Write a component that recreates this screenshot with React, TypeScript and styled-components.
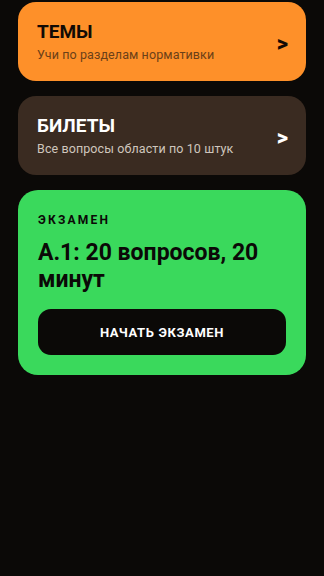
import React from "react";
import styled, { createGlobalStyle } from "styled-components";

const Global = createGlobalStyle`
  html, body {
    margin: 0;
    padding: 0;
    background: #0b0907;
  }
  body {
    font-family: Roboto, "Noto Sans", sans-serif;
  }
`;

const Page = styled.div`
  min-height: 576px;
  background: #0b0907;
  padding: 2px 18px 20px;
  box-sizing: border-box;
  display: flex;
  flex-direction: column;
  gap: 15px;
`;

const NavCard = styled.div<{ $bg: string; $fg: string }>`
  background: ${(p) => p.$bg};
  color: ${(p) => p.$fg};
  border-radius: 18px;
  height: 79px;
  box-sizing: border-box;
  padding: 0 18px 0 19px;
  display: flex;
  align-items: center;
  justify-content: space-between;
`;

const NavText = styled.div`
  display: flex;
  flex-direction: column;
  gap: 4px;
`;

const NavTitle = styled.div`
  font-size: 19px;
  font-weight: 700;
  line-height: 22px;
`;

const NavSub = styled.div<{ $c: string }>`
  font-size: 12.5px;
  line-height: 16px;
  letter-spacing: 0.1px;
  color: ${(p) => p.$c};
`;

const Arrow = styled.span`
  font-size: 22px;
  font-weight: 900;
  line-height: 1;
  margin-top: 4px;
`;

const ExamCard = styled.div`
  background: #3ad95c;
  color: #0b0907;
  border-radius: 20px;
  padding: 22px 20px 20px;
  display: flex;
  flex-direction: column;
`;

const Label = styled.div`
  font-size: 12px;
  font-weight: 700;
  letter-spacing: 2.2px;
  line-height: 16px;
`;

const ExamTitle = styled.div`
  font-size: 23px;
  font-weight: 700;
  line-height: 27px;
  margin-top: 11px;
`;

const StartButton = styled.button`
  margin-top: 16px;
  height: 46px;
  border: none;
  border-radius: 13px;
  background: #0b0907;
  color: #ffffff;
  font-family: Roboto, "Noto Sans", sans-serif;
  font-size: 13px;
  font-weight: 700;
  letter-spacing: 0.6px;
`;

export default function App() {
  return (
    <>
      <Global />
      <Page>
        <NavCard $bg="#fe9029" $fg="#120b05">
          <NavText>
            <NavTitle>ТЕМЫ</NavTitle>
            <NavSub $c="#6b4018">Учи по разделам нормативки</NavSub>
          </NavText>
          <Arrow>&gt;</Arrow>
        </NavCard>
        <NavCard $bg="#3a2b21" $fg="#ffffff">
          <NavText>
            <NavTitle>БИЛЕТЫ</NavTitle>
            <NavSub $c="#cfc6bd">Все вопросы области по 10 штук</NavSub>
          </NavText>
          <Arrow>&gt;</Arrow>
        </NavCard>
        <ExamCard>
          <Label>ЭКЗАМЕН</Label>
          <ExamTitle>А.1: 20 вопросов, 20 минут</ExamTitle>
          <StartButton>НАЧАТЬ ЭКЗАМЕН</StartButton>
        </ExamCard>
      </Page>
    </>
  );
}
